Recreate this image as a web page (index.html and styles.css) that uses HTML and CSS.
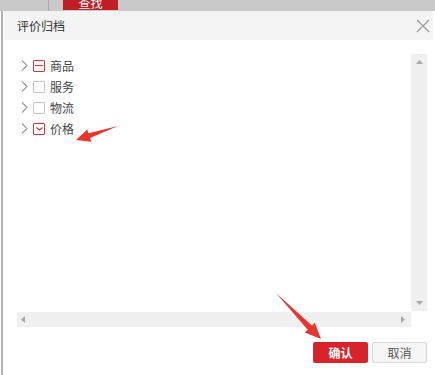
FILE: index.html
```html
<!DOCTYPE html>
<html lang="zh-CN">
<head>
  <meta charset="utf-8">
  <title>评价归档</title>
  <link rel="stylesheet" href="styles.css">
</head>
<body>

<div class="topbar">
  <div class="topbar-line"></div>
  <div class="find-btn">查找</div>
</div>

<div class="stage">
  <div class="edge"></div>

  <div class="dialog">
    <div class="dialog-head">
      <span class="dialog-title">评价归档</span>
      <svg class="close" width="14" height="14" viewBox="0 0 14 14">
        <path d="M1 1 L13 13 M13 1 L1 13" stroke="#9a9a9a" stroke-width="1.2" fill="none"/>
      </svg>
    </div>

    <div class="dialog-body">
      <div class="tree-box">
        <div class="tree">
          <div class="tree-row">
            <svg class="caret" width="7" height="11" viewBox="0 0 7 11"><path d="M1 0.5 L6 5.5 L1 10.5" stroke="#9c9c9c" stroke-width="1.1" fill="none"/></svg>
            <span class="check half"></span>
            <span class="label">商品</span>
          </div>
          <div class="tree-row">
            <svg class="caret" width="7" height="11" viewBox="0 0 7 11"><path d="M1 0.5 L6 5.5 L1 10.5" stroke="#9c9c9c" stroke-width="1.1" fill="none"/></svg>
            <span class="check"></span>
            <span class="label">服务</span>
          </div>
          <div class="tree-row">
            <svg class="caret" width="7" height="11" viewBox="0 0 7 11"><path d="M1 0.5 L6 5.5 L1 10.5" stroke="#9c9c9c" stroke-width="1.1" fill="none"/></svg>
            <span class="check"></span>
            <span class="label">物流</span>
          </div>
          <div class="tree-row">
            <svg class="caret" width="7" height="11" viewBox="0 0 7 11"><path d="M1 0.5 L6 5.5 L1 10.5" stroke="#9c9c9c" stroke-width="1.1" fill="none"/></svg>
            <span class="check on">
              <svg width="9" height="9" viewBox="0 0 9 9"><path d="M1.5 3.5 L4.5 6 L7.5 3.5" stroke="#d0343c" stroke-width="1.2" fill="none"/></svg>
            </span>
            <span class="label">价格</span>
          </div>
        </div>

        <div class="vscroll">
          <svg width="7" height="4" viewBox="0 0 7 4"><path d="M0 4 L3.5 0 L7 4 Z" fill="#a8a8a8"/></svg>
          <svg width="7" height="4" viewBox="0 0 7 4"><path d="M0 0 L3.5 4 L7 0 Z" fill="#a8a8a8"/></svg>
        </div>
        <div class="hscroll">
          <svg width="4" height="7" viewBox="0 0 4 7"><path d="M4 0 L0 3.5 L4 7 Z" fill="#a8a8a8"/></svg>
          <svg width="4" height="7" viewBox="0 0 4 7"><path d="M0 0 L4 3.5 L0 7 Z" fill="#a8a8a8"/></svg>
        </div>
      </div>

      <div class="actions">
        <div class="btn btn-ok">确认</div>
        <div class="btn btn-cancel">取消</div>
      </div>
    </div>
  </div>
</div>

<!-- annotation arrows drawn over the screenshot -->
<svg class="marks" width="435" height="375" viewBox="0 0 435 375">
  <polygon points="118,126 88.5,133.2 87.2,129.4 76,140 91.4,141.8 90.1,138" fill="#e8352e"/>
  <polygon points="276,293 311.9,325.5 314.8,322.7 321,339 304.8,332.5 307.7,329.7" fill="#e8352e"/>
</svg>

</body>
</html>
```

FILE: styles.css
```css
body { margin: 0; padding: 0; background: white; font-family: "Noto Sans CJK SC", "Noto Sans", sans-serif; font-size: 12px; color: #333; width: 435px; height: 375px; overflow: hidden; position: relative }

/* page behind the dialog */
.topbar { height: 11px; background: #c9c9c9; display: flex; align-items: flex-start }
.topbar-line { width: 1px; height: 11px; background: #a9a9a9; margin-left: 48px }
.find-btn { margin-left: 14px; width: 55px; height: 10px; background: #bf1e24; color: white; text-align: center; line-height: 6px; overflow: hidden; font-size: 12px }

.stage { display: flex; height: 364px }
.edge { width: 4px; background: linear-gradient(to right, white 0, white 1px, #b0b0b0 1px, #b0b0b0 3px, white 3px) }

/* dialog */
.dialog { width: 429px; background: white; display: flex; flex-direction: column }
.dialog-head { height: 29px; background: #f4f4f4; display: flex; align-items: center; justify-content: space-between; padding: 0 3px 0 13px }
.dialog-title { color: #333; font-size: 12px }
.close { margin-top: 1px }

.dialog-body { padding: 12px 6px 0 13px; display: flex; flex-direction: column }

.tree-box { height: 275px; display: grid; grid-template-columns: 1fr 16px; grid-template-rows: 1fr 15px }
.tree { padding: 3px 0 0 4px }
.tree-row { height: 21px; display: flex; align-items: center }
.caret { margin-right: 5px }
.check { width: 10px; height: 10px; border: 1px solid #c6c6c6; border-radius: 1px; display: flex; align-items: center; justify-content: center }
.check.half { border-color: #d0343c }
.check.half::after { content: ""; width: 8px; height: 1px; background: #d0343c }
.check.on { border-color: #d0343c }
.label { margin-left: 5px; color: #444 }

.vscroll { margin-top: 2px; margin-bottom: 1px; background: #f0f0f0; display: flex; flex-direction: column; justify-content: space-between; align-items: center; padding: 6px 0 6px }
.hscroll { background: #f0f0f0; display: flex; justify-content: space-between; align-items: center; padding: 0 6px 0 4px }

.actions { display: flex; justify-content: flex-end; gap: 4px; margin-top: 15px }
.btn { width: 55px; height: 21px; line-height: 21px; text-align: center; font-size: 12px; border-radius: 2px; box-sizing: border-box }
.btn-ok { background: #d9232a; color: white; font-weight: bold }
.btn-cancel { background: #f6f6f6; border: 1px solid #d6d6d6; color: #555; line-height: 19px }

.marks { position: absolute; left: 0; top: 0 }
```
